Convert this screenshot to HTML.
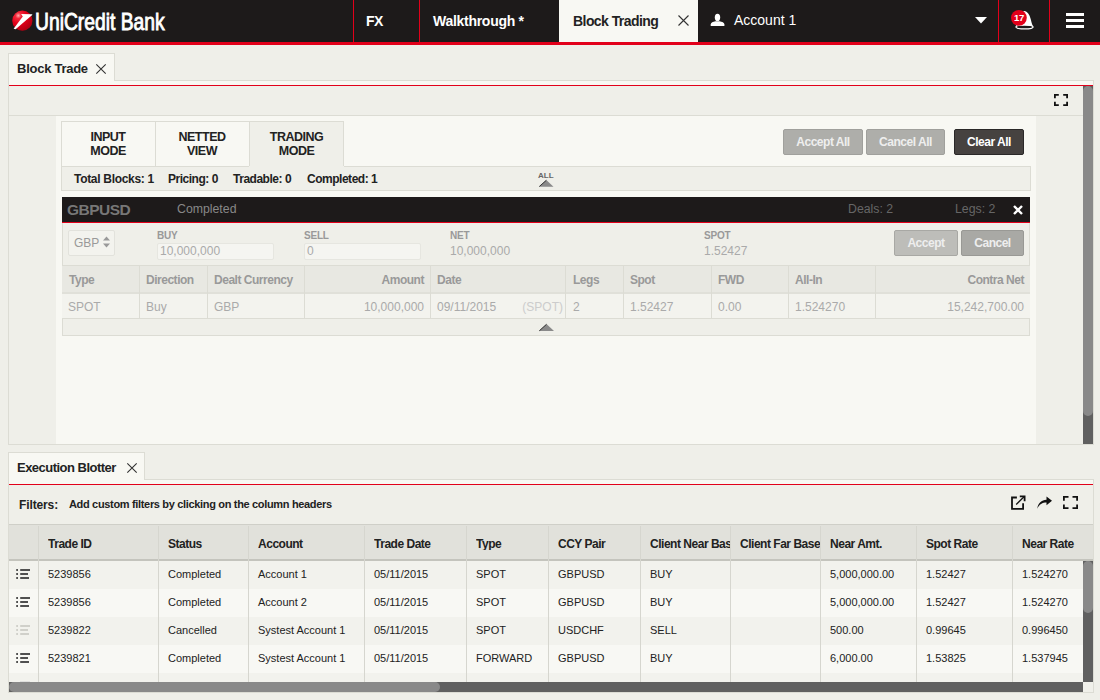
<!DOCTYPE html>
<html><head><meta charset="utf-8">
<style>
*{box-sizing:border-box;margin:0;padding:0}
html,body{width:1100px;height:700px;overflow:hidden}
body{position:relative;background:#efefe9;font-family:"Liberation Sans",sans-serif;color:#222}
.a{position:absolute}
.t{position:absolute;white-space:nowrap;line-height:1}
.b{font-weight:bold;letter-spacing:-0.04em}
svg{position:absolute;overflow:visible}
</style></head><body>

<!-- HEADER -->
<div class="a" style="left:0;top:0;width:1100px;height:42px;background:#1d1a1a"></div>
<div class="a" style="left:0;top:42px;width:1100px;height:3px;background:#e2001a"></div>
<div class="a" style="left:353px;top:0;width:1px;height:42px;background:#e2001a"></div>
<div class="a" style="left:419px;top:0;width:1px;height:42px;background:#e2001a"></div>
<div class="a" style="left:998px;top:0;width:1px;height:42px;background:#e2001a"></div>
<div class="a" style="left:1049px;top:0;width:1px;height:42px;background:#e2001a"></div>
<div class="a" style="left:559px;top:0;width:139px;height:42px;background:#f8f8f3"></div>

<!-- logo -->
<svg style="left:0;top:0" width="40" height="42">
  <defs><radialGradient id="rg" cx="0.3" cy="0.25" r="0.8">
    <stop offset="0" stop-color="#ffb0b0"/><stop offset="0.18" stop-color="#f2283a"/><stop offset="0.5" stop-color="#e2001a"/><stop offset="1" stop-color="#b00012"/></radialGradient></defs>
  <circle cx="22.35" cy="20.65" r="10.1" fill="url(#rg)"/>
  <path d="M21.1 14.1 L32.3 14.2 L32.2 15.1 L15.6 29.2 L13.6 28.8 L22.8 16.4 Z" fill="#fff"/>
</svg>
<div class="t" id="logo" style="letter-spacing:0;left:35px;top:10px;font-size:24px;color:#fff;-webkit-text-stroke:0.9px #fff;transform-origin:0 0;transform:scaleX(0.803)">UniCredit Bank</div>

<div class="t b" style="left:366px;top:14px;font-size:14px;color:#fff">FX</div>
<div class="t b" style="left:433px;top:14px;font-size:14px;letter-spacing:-0.02em;color:#fff">Walkthrough *</div>
<div class="t b" style="left:573px;top:14px;font-size:14px;color:#222">Block Trading</div>
<svg style="left:678px;top:15px" width="11" height="11"><path d="M0.5 0.5 L10.5 10.5 M10.5 0.5 L0.5 10.5" stroke="#333" stroke-width="1.1"/></svg>
<svg style="left:705px;top:8px" width="25" height="24"><ellipse cx="12.5" cy="9.4" rx="2.7" ry="3.7" fill="#fff"/><path d="M5.7 18 L5.7 16.6 C5.7 14.6 8 13.8 10.5 13.3 L14.5 13.3 C17 13.8 19.4 14.6 19.4 16.6 L19.4 18 Z" fill="#fff"/></svg>
<div class="t" style="left:734px;top:13px;font-size:14px;color:#fff">Account 1</div>
<svg style="left:975px;top:17px" width="12" height="7"><path d="M0 0 L12 0 L6 6.5 Z" fill="#fff"/></svg>
<!-- bell -->
<svg style="left:1008px;top:8px" width="30" height="24">
  <path d="M8 18.5 C9.5 15 9 5 16.5 3 C21 4 22 9 22.7 11 C23.5 14 24 16.5 25.2 18.5 Z" fill="#fff"/>
  <ellipse cx="16.5" cy="19" rx="8.6" ry="1.9" fill="#1d1a1a" stroke="#fff" stroke-width="1.3"/>
  <circle cx="10.9" cy="9.85" r="7.9" fill="#e2001a"/>
  <text x="11" y="13.3" font-family="Liberation Sans" font-weight="bold" font-size="9.5" fill="#fff" text-anchor="middle" letter-spacing="-0.3">17</text>
</svg>
<div class="a" style="left:1066px;top:13px;width:18px;height:3px;background:#fff"></div>
<div class="a" style="left:1066px;top:19px;width:18px;height:3px;background:#fff"></div>
<div class="a" style="left:1066px;top:25px;width:18px;height:3px;background:#fff"></div>

<!-- BLOCK TRADE PANEL -->
<div class="a" style="left:8px;top:80px;width:1085px;height:1px;background:#dcdcd4"></div>
<div class="a" style="left:8px;top:81px;width:1085px;height:4px;background:#f8f8f3"></div>
<div class="a" style="left:8px;top:53px;width:107px;height:28px;background:#f8f8f3;border:1px solid #dcdcd4;border-bottom:none"></div>
<div class="t b" style="left:17px;top:62px;font-size:13px;letter-spacing:-0.02em;color:#222">Block Trade</div>
<svg style="left:96px;top:63.5px" width="10" height="10"><path d="M0.3 0.3 L9.7 9.7 M9.7 0.3 L0.3 9.7" stroke="#333" stroke-width="1.1"/></svg>
<div class="a" style="left:8px;top:85px;width:1085px;height:1px;background:#e2001a"></div>
<div class="a" style="left:8px;top:81px;width:1px;height:364px;background:#dcdcd4"></div>
<div class="a" style="left:8px;top:444px;width:1085px;height:1px;background:#dcdcd4"></div>
<div class="a" style="left:9px;top:115px;width:1074px;height:1px;background:#dcdcd4"></div>
<div class="a" style="left:56px;top:116px;width:980px;height:328px;background:#f8f8f3"></div>
<!-- expand icon -->
<svg style="left:1054px;top:94px" width="14" height="12"><path d="M0.9 4.2 V0.9 H4.8 M9.2 0.9 H13.1 V4.2 M13.1 7.8 V11.1 H9.2 M4.8 11.1 H0.9 V7.8" stroke="#111" stroke-width="1.8" fill="none"/></svg>
<!-- scrollbar -->
<div class="a" style="left:1083px;top:86px;width:10px;height:358px;background:#606060"></div>
<div class="a" style="left:1083px;top:86px;width:10px;height:330px;background:#898989;border-radius:5px"></div>

<!-- mode tabs -->
<div class="a" style="left:61px;top:121px;width:283px;height:46px;border:1px solid #dcdcd4;border-bottom:none;background:#f8f8f3"></div>
<div class="a" style="left:249px;top:121px;width:95px;height:46px;background:#efefe9;border:1px solid #dcdcd4;border-bottom:none"></div>
<div class="a" style="left:155px;top:121px;width:1px;height:46px;background:#dcdcd4"></div>
<div class="t b" style="left:61px;top:130px;width:94px;text-align:center;font-size:12.5px;line-height:14px;white-space:normal">INPUT<br>MODE</div>
<div class="t b" style="left:155px;top:130px;width:94px;text-align:center;font-size:12.5px;line-height:14px;white-space:normal">NETTED<br>VIEW</div>
<div class="t b" style="left:249px;top:130px;width:95px;text-align:center;font-size:12.5px;line-height:14px;white-space:normal">TRADING<br>MODE</div>
<div class="a" style="left:61px;top:166px;width:970px;height:25px;background:#efefe9;border:1px solid #dcdcd4;border-top:none"></div>
<div class="a" style="left:61px;top:166px;width:188px;height:1px;background:#dcdcd4"></div>
<div class="a" style="left:344px;top:166px;width:687px;height:1px;background:#dcdcd4"></div>
<div class="t b" style="left:74px;top:173px;font-size:12px;letter-spacing:-0.3px">Total Blocks: 1</div>
<div class="t b" style="left:168px;top:173px;font-size:12px">Pricing: 0</div>
<div class="t b" style="left:233px;top:173px;font-size:12px">Tradable: 0</div>
<div class="t b" style="left:307px;top:173px;font-size:12px">Completed: 1</div>
<div class="t b" style="left:538px;top:171.5px;font-size:8px;letter-spacing:0;color:#666">ALL</div>
<svg style="left:539px;top:180px" width="15" height="7"><path d="M0 6.7 L7.3 0 L14.5 6.7 Z" fill="#8a8a8a"/><path d="M0.3 6.5 L7.3 0.3" stroke="#333" stroke-width="1"/></svg>

<!-- buttons -->
<div class="a" style="left:783px;top:129px;width:80px;height:26px;background:#aeaeaa;border:1px solid #a0a09c;border-radius:2px"></div>
<div class="t b" style="left:783px;top:136px;width:80px;text-align:center;font-size:12px;color:#eee">Accept All</div>
<div class="a" style="left:866px;top:129px;width:79px;height:26px;background:#aeaeaa;border:1px solid #a0a09c;border-radius:2px"></div>
<div class="t b" style="left:866px;top:136px;width:79px;text-align:center;font-size:12px;color:#eee">Cancel All</div>
<div class="a" style="left:954px;top:129px;width:70px;height:26px;background:#464240;border:1px solid #2a2828;border-radius:2px"></div>
<div class="t b" style="left:954px;top:136px;width:70px;text-align:center;font-size:12px;color:#fff">Clear All</div>

<!-- GBPUSD block -->
<div class="a" style="left:62px;top:197px;width:968px;height:25px;background:#1d1a1a"></div>
<div class="a" style="left:62px;top:222px;width:968px;height:1px;background:#e2001a"></div>
<div class="a" style="left:62px;top:223px;width:968px;height:113px;background:#efefe9;border:1px solid #dcdcd4;border-top:none"></div>
<div class="t b" style="left:67px;top:202px;font-size:15.5px;letter-spacing:-0.5px;color:#777">GBPUSD</div>
<div class="t" style="left:177px;top:203px;font-size:12.3px;color:#888">Completed</div>
<div class="t" style="left:848px;top:203px;font-size:12.3px;color:#666">Deals: 2</div>
<div class="t" style="left:955px;top:203px;font-size:12.3px;color:#666">Legs: 2</div>
<svg style="left:1013px;top:205px" width="10" height="10"><path d="M1 1 L9 9 M9 1 L1 9" stroke="#fff" stroke-width="2.4"/></svg>

<div class="a" style="left:68px;top:230px;width:47px;height:26px;background:#f3f3ee;border:1px solid #e2e2dc;border-radius:2px"></div>
<div class="t" style="left:74px;top:237px;font-size:12px;color:#999">GBP</div>
<svg style="left:103px;top:236px" width="7" height="12"><path d="M0 4.5 L3.5 0.5 L7 4.5 Z M0 7.5 L3.5 11.5 L7 7.5 Z" fill="#999"/></svg>

<div class="t b" style="left:157px;top:231px;font-size:10px;letter-spacing:-0.02em;color:#999">BUY</div>
<div class="a" style="left:157px;top:243px;width:117px;height:17px;background:#f5f5f1;border:1px solid #e6e6e0;border-radius:2px"></div>
<div class="t" style="left:160px;top:245px;font-size:12px;color:#aaa">10,000,000</div>
<div class="t b" style="left:304px;top:231px;font-size:10px;letter-spacing:-0.02em;color:#999">SELL</div>
<div class="a" style="left:304px;top:243px;width:117px;height:17px;background:#f5f5f1;border:1px solid #e6e6e0;border-radius:2px"></div>
<div class="t" style="left:307px;top:245px;font-size:12px;color:#aaa">0</div>
<div class="t b" style="left:450px;top:231px;font-size:10px;letter-spacing:-0.02em;color:#999">NET</div>
<div class="t" style="left:450px;top:245px;font-size:12px;color:#aaa">10,000,000</div>
<div class="t b" style="left:704px;top:231px;font-size:10px;letter-spacing:-0.02em;color:#999">SPOT</div>
<div class="t" style="left:704px;top:245px;font-size:12px;color:#aaa">1.52427</div>

<div class="a" style="left:894px;top:230px;width:64px;height:26px;background:#bdbdb9;border:1px solid #a8a8a4;border-radius:2px"></div>
<div class="t b" style="left:894px;top:237px;width:64px;text-align:center;font-size:12px;color:#eee">Accept</div>
<div class="a" style="left:961px;top:230px;width:63px;height:26px;background:#a9a9a5;border:1px solid #999995;border-radius:2px"></div>
<div class="t b" style="left:961px;top:237px;width:63px;text-align:center;font-size:12px;color:#eee">Cancel</div>

<!-- inner table -->
<div class="a" style="left:62px;top:265px;width:968px;height:29px;background:#e8e8e2;border-top:1px solid #dcdcd4;border-bottom:2px solid #e0e0d9"></div>
<div class="a" style="left:62px;top:294px;width:968px;height:25px;background:#f3f3ee;border-bottom:1px solid #dcdcd4"></div>
<div class="a" style="left:139px;top:265px;width:1px;height:54px;background:#dcdcd4"></div>
<div class="a" style="left:207px;top:265px;width:1px;height:54px;background:#dcdcd4"></div>
<div class="a" style="left:304px;top:265px;width:1px;height:54px;background:#dcdcd4"></div>
<div class="a" style="left:430px;top:265px;width:1px;height:54px;background:#dcdcd4"></div>
<div class="a" style="left:565px;top:265px;width:1px;height:54px;background:#dcdcd4"></div>
<div class="a" style="left:623px;top:265px;width:1px;height:54px;background:#dcdcd4"></div>
<div class="a" style="left:711px;top:265px;width:1px;height:54px;background:#dcdcd4"></div>
<div class="a" style="left:788px;top:265px;width:1px;height:54px;background:#dcdcd4"></div>
<div class="a" style="left:875px;top:265px;width:1px;height:54px;background:#dcdcd4"></div>

<div class="t b" style="left:69px;top:274px;font-size:12px;color:#999">Type</div>
<div class="t b" style="left:146px;top:274px;font-size:12px;color:#999">Direction</div>
<div class="t b" style="left:214px;top:274px;font-size:12px;color:#999">Dealt Currency</div>
<div class="t b" style="left:304px;top:274px;width:120px;text-align:right;font-size:12px;color:#999">Amount</div>
<div class="t b" style="left:437px;top:274px;font-size:12px;color:#999">Date</div>
<div class="t b" style="left:573px;top:274px;font-size:12px;color:#999">Legs</div>
<div class="t b" style="left:630px;top:274px;font-size:12px;color:#999">Spot</div>
<div class="t b" style="left:718px;top:274px;font-size:12px;color:#999">FWD</div>
<div class="t b" style="left:795px;top:274px;font-size:12px;color:#999">All-In</div>
<div class="t b" style="left:875px;top:274px;width:149px;text-align:right;font-size:12px;color:#999">Contra Net</div>

<div class="t" style="left:68px;top:301px;font-size:12px;color:#aaa">SPOT</div>
<div class="t" style="left:146px;top:301px;font-size:12px;color:#aaa">Buy</div>
<div class="t" style="left:214px;top:301px;font-size:12px;color:#aaa">GBP</div>
<div class="t" style="left:304px;top:301px;width:120px;text-align:right;font-size:12px;color:#aaa">10,000,000</div>
<div class="t" style="left:437px;top:301px;font-size:12px;color:#aaa">09/11/2015</div>
<div class="t" style="left:430px;top:301px;width:133px;text-align:right;font-size:12px;color:#ccc">(SPOT)</div>
<div class="t" style="left:573px;top:301px;font-size:12px;color:#aaa">2</div>
<div class="t" style="left:630px;top:301px;font-size:12px;color:#aaa">1.52427</div>
<div class="t" style="left:718px;top:301px;font-size:12px;color:#aaa">0.00</div>
<div class="t" style="left:795px;top:301px;font-size:12px;color:#aaa">1.524270</div>
<div class="t" style="left:875px;top:301px;width:149px;text-align:right;font-size:12px;color:#aaa">15,242,700.00</div>
<svg style="left:539px;top:324px" width="15" height="7"><path d="M0 7 L7.5 0 L15 7 Z" fill="#8a8a8a"/><path d="M0.3 6.8 L7.5 0.3" stroke="#333" stroke-width="1"/></svg>

<!-- EXECUTION BLOTTER -->
<div class="a" style="left:8px;top:479px;width:1085px;height:1px;background:#dcdcd4"></div>
<div class="a" style="left:8px;top:480px;width:1085px;height:4px;background:#f8f8f3"></div>
<div class="a" style="left:8px;top:452px;width:137px;height:28px;background:#f8f8f3;border:1px solid #dcdcd4;border-bottom:none"></div>
<div class="t b" style="left:17px;top:461px;font-size:13px;color:#222">Execution Blotter</div>
<svg style="left:126.5px;top:462.5px" width="10" height="10"><path d="M0.3 0.3 L9.7 9.7 M9.7 0.3 L0.3 9.7" stroke="#333" stroke-width="1.1"/></svg>
<div class="a" style="left:8px;top:484px;width:1085px;height:1px;background:#e2001a"></div>
<div class="a" style="left:8px;top:480px;width:1px;height:212px;background:#dcdcd4"></div>
<div class="t b" style="left:19px;top:499px;font-size:12px;letter-spacing:-0.01em;color:#222">Filters:</div>
<div class="t b" style="left:69px;top:499px;font-size:11px;letter-spacing:-0.03em;color:#222">Add custom filters by clicking on the column headers</div>
<!-- icons -->
<svg style="left:1006px;top:490px" width="22" height="22"><path d="M10.9 7.5 H6 V18.9 H17.1 V13.2" stroke="#111" stroke-width="1.8" fill="none"/><path d="M10.2 14.5 L18 6.7" stroke="#111" stroke-width="1.3"/><path d="M13.8 6.4 H18.6 V11.2" stroke="#111" stroke-width="1.8" fill="none"/></svg>
<svg style="left:1036px;top:494px" width="17" height="16"><path d="M1.2 14.8 C2 9 5.5 6 10.5 5.8 V2.4 L16 6.8 L10.5 11.2 V8.6 C6.5 8.6 3.2 10.5 1.2 14.8 Z" fill="#111"/></svg>
<svg style="left:1063px;top:496px" width="16" height="14"><path d="M0.9 4.8 V0.9 H5.5 M9.5 0.9 H14.1 V4.8 M14.1 8.5 V12.2 H9.5 M5.5 12.2 H0.9 V8.5" stroke="#111" stroke-width="1.8" fill="none"/></svg>

<!-- blotter table -->
<div class="a" style="left:9px;top:524px;width:1084px;height:37px;background:#e1e1db;border-top:1px solid #cfcfc8;border-bottom:2px solid #c4c4bd"></div>
<div class="a" style="left:9px;top:561px;width:1074px;height:28px;background:#f2f2ed"></div>
<div class="a" style="left:9px;top:589px;width:1074px;height:28px;background:#f8f8f4"></div>
<div class="a" style="left:9px;top:617px;width:1074px;height:28px;background:#f2f2ed"></div>
<div class="a" style="left:9px;top:645px;width:1074px;height:28px;background:#f8f8f4"></div>
<div class="a" style="left:9px;top:673px;width:1074px;height:9px;background:#f2f2ed"></div>
<div class="a" style="left:38px;top:526px;width:1px;height:156px;background:#d6d6cf"></div>
<div class="a" style="left:158px;top:526px;width:1px;height:156px;background:#d6d6cf"></div>
<div class="a" style="left:248px;top:526px;width:1px;height:156px;background:#d6d6cf"></div>
<div class="a" style="left:364px;top:526px;width:1px;height:156px;background:#d6d6cf"></div>
<div class="a" style="left:466px;top:526px;width:1px;height:156px;background:#d6d6cf"></div>
<div class="a" style="left:548px;top:526px;width:1px;height:156px;background:#d6d6cf"></div>
<div class="a" style="left:640px;top:526px;width:1px;height:156px;background:#d6d6cf"></div>
<div class="a" style="left:730px;top:526px;width:1px;height:156px;background:#d6d6cf"></div>
<div class="a" style="left:820px;top:526px;width:1px;height:156px;background:#d6d6cf"></div>
<div class="a" style="left:916px;top:526px;width:1px;height:156px;background:#d6d6cf"></div>
<div class="a" style="left:1012px;top:526px;width:1px;height:156px;background:#d6d6cf"></div>

<div class="t b" style="left:48px;top:538px;width:110px;overflow:hidden;font-size:12px;color:#222">Trade ID</div>
<div class="t b" style="left:168px;top:538px;width:80px;overflow:hidden;font-size:12px;color:#222">Status</div>
<div class="t b" style="left:258px;top:538px;width:106px;overflow:hidden;font-size:12px;color:#222">Account</div>
<div class="t b" style="left:374px;top:538px;width:92px;overflow:hidden;font-size:12px;color:#222">Trade Date</div>
<div class="t b" style="left:476px;top:538px;width:72px;overflow:hidden;font-size:12px;color:#222">Type</div>
<div class="t b" style="left:558px;top:538px;width:82px;overflow:hidden;font-size:12px;color:#222">CCY Pair</div>
<div class="t b" style="left:650px;top:538px;width:80px;overflow:hidden;font-size:12px;color:#222">Client Near Base</div>
<div class="t b" style="left:740px;top:538px;width:80px;overflow:hidden;font-size:12px;color:#222">Client Far Base</div>
<div class="t b" style="left:830px;top:538px;width:86px;overflow:hidden;font-size:12px;color:#222">Near Amt.</div>
<div class="t b" style="left:926px;top:538px;width:86px;overflow:hidden;font-size:12px;color:#222">Spot Rate</div>
<div class="t b" style="left:1022px;top:538px;width:61px;overflow:hidden;font-size:12px;color:#222">Near Rate</div>
<div class="t" style="left:48px;top:569px;font-size:11px;color:#222">5239856</div>
<div class="t" style="left:168px;top:569px;font-size:11px;color:#222">Completed</div>
<div class="t" style="left:258px;top:569px;font-size:11px;color:#222">Account 1</div>
<div class="t" style="left:374px;top:569px;font-size:11px;color:#222">05/11/2015</div>
<div class="t" style="left:476px;top:569px;font-size:11px;color:#222">SPOT</div>
<div class="t" style="left:558px;top:569px;font-size:11px;color:#222">GBPUSD</div>
<div class="t" style="left:650px;top:569px;font-size:11px;color:#222">BUY</div>
<div class="t" style="left:830px;top:569px;font-size:11px;color:#222">5,000,000.00</div>
<div class="t" style="left:926px;top:569px;font-size:11px;color:#222">1.52427</div>
<div class="t" style="left:1022px;top:569px;font-size:11px;color:#222">1.524270</div>
<svg style="left:16px;top:569px" width="14" height="10"><path d="M0.2 1 H2 M0.2 5 H2 M0.2 9 H2" stroke="#505050" stroke-width="1.8"/><path d="M4.2 1 H14 M4.2 5 H12 M4.2 9 H13" stroke="#505050" stroke-width="1.8"/></svg>
<div class="t" style="left:48px;top:597px;font-size:11px;color:#222">5239856</div>
<div class="t" style="left:168px;top:597px;font-size:11px;color:#222">Completed</div>
<div class="t" style="left:258px;top:597px;font-size:11px;color:#222">Account 2</div>
<div class="t" style="left:374px;top:597px;font-size:11px;color:#222">05/11/2015</div>
<div class="t" style="left:476px;top:597px;font-size:11px;color:#222">SPOT</div>
<div class="t" style="left:558px;top:597px;font-size:11px;color:#222">GBPUSD</div>
<div class="t" style="left:650px;top:597px;font-size:11px;color:#222">BUY</div>
<div class="t" style="left:830px;top:597px;font-size:11px;color:#222">5,000,000.00</div>
<div class="t" style="left:926px;top:597px;font-size:11px;color:#222">1.52427</div>
<div class="t" style="left:1022px;top:597px;font-size:11px;color:#222">1.524270</div>
<svg style="left:16px;top:597px" width="14" height="10"><path d="M0.2 1 H2 M0.2 5 H2 M0.2 9 H2" stroke="#505050" stroke-width="1.8"/><path d="M4.2 1 H14 M4.2 5 H12 M4.2 9 H13" stroke="#505050" stroke-width="1.8"/></svg>
<div class="t" style="left:48px;top:625px;font-size:11px;color:#222">5239822</div>
<div class="t" style="left:168px;top:625px;font-size:11px;color:#222">Cancelled</div>
<div class="t" style="left:258px;top:625px;font-size:11px;color:#222">Systest Account 1</div>
<div class="t" style="left:374px;top:625px;font-size:11px;color:#222">05/11/2015</div>
<div class="t" style="left:476px;top:625px;font-size:11px;color:#222">SPOT</div>
<div class="t" style="left:558px;top:625px;font-size:11px;color:#222">USDCHF</div>
<div class="t" style="left:650px;top:625px;font-size:11px;color:#222">SELL</div>
<div class="t" style="left:830px;top:625px;font-size:11px;color:#222">500.00</div>
<div class="t" style="left:926px;top:625px;font-size:11px;color:#222">0.99645</div>
<div class="t" style="left:1022px;top:625px;font-size:11px;color:#222">0.996450</div>
<svg style="left:16px;top:625px" width="14" height="10"><path d="M0.2 1 H2 M0.2 5 H2 M0.2 9 H2" stroke="#d0d0ca" stroke-width="1.8"/><path d="M4.2 1 H14 M4.2 5 H12 M4.2 9 H13" stroke="#d0d0ca" stroke-width="1.8"/></svg>
<div class="t" style="left:48px;top:653px;font-size:11px;color:#222">5239821</div>
<div class="t" style="left:168px;top:653px;font-size:11px;color:#222">Completed</div>
<div class="t" style="left:258px;top:653px;font-size:11px;color:#222">Systest Account 1</div>
<div class="t" style="left:374px;top:653px;font-size:11px;color:#222">05/11/2015</div>
<div class="t" style="left:476px;top:653px;font-size:11px;color:#222">FORWARD</div>
<div class="t" style="left:558px;top:653px;font-size:11px;color:#222">GBPUSD</div>
<div class="t" style="left:650px;top:653px;font-size:11px;color:#222">BUY</div>
<div class="t" style="left:830px;top:653px;font-size:11px;color:#222">6,000.00</div>
<div class="t" style="left:926px;top:653px;font-size:11px;color:#222">1.53825</div>
<div class="t" style="left:1022px;top:653px;font-size:11px;color:#222">1.537945</div>
<svg style="left:16px;top:653px" width="14" height="10"><path d="M0.2 1 H2 M0.2 5 H2 M0.2 9 H2" stroke="#505050" stroke-width="1.8"/><path d="M4.2 1 H14 M4.2 5 H12 M4.2 9 H13" stroke="#505050" stroke-width="1.8"/></svg>
<svg style="left:16px;top:681px" width="14" height="2"><path d="M4 1 H14" stroke="#ccc" stroke-width="1"/></svg>

<div class="a" style="left:1083px;top:561px;width:10px;height:121px;background:#606060"></div>
<div class="a" style="left:1083px;top:561px;width:10px;height:52px;background:#898989;border-radius:5px"></div>
<div class="a" style="left:9px;top:682px;width:1074px;height:10px;background:#606060"></div>
<div class="a" style="left:9px;top:682px;width:431px;height:10px;background:#898989;border-radius:5px"></div>
<div class="a" style="left:1083px;top:682px;width:10px;height:10px;background:#f0f0ea"></div>
<div class="a" style="left:1093px;top:479px;width:1px;height:213px;background:#dcdcd4"></div>
<div class="a" style="left:8px;top:692px;width:1086px;height:1px;background:#dcdcd4"></div>
<div class="a" style="left:1093px;top:80px;width:1px;height:365px;background:#dcdcd4"></div>

</body></html>
